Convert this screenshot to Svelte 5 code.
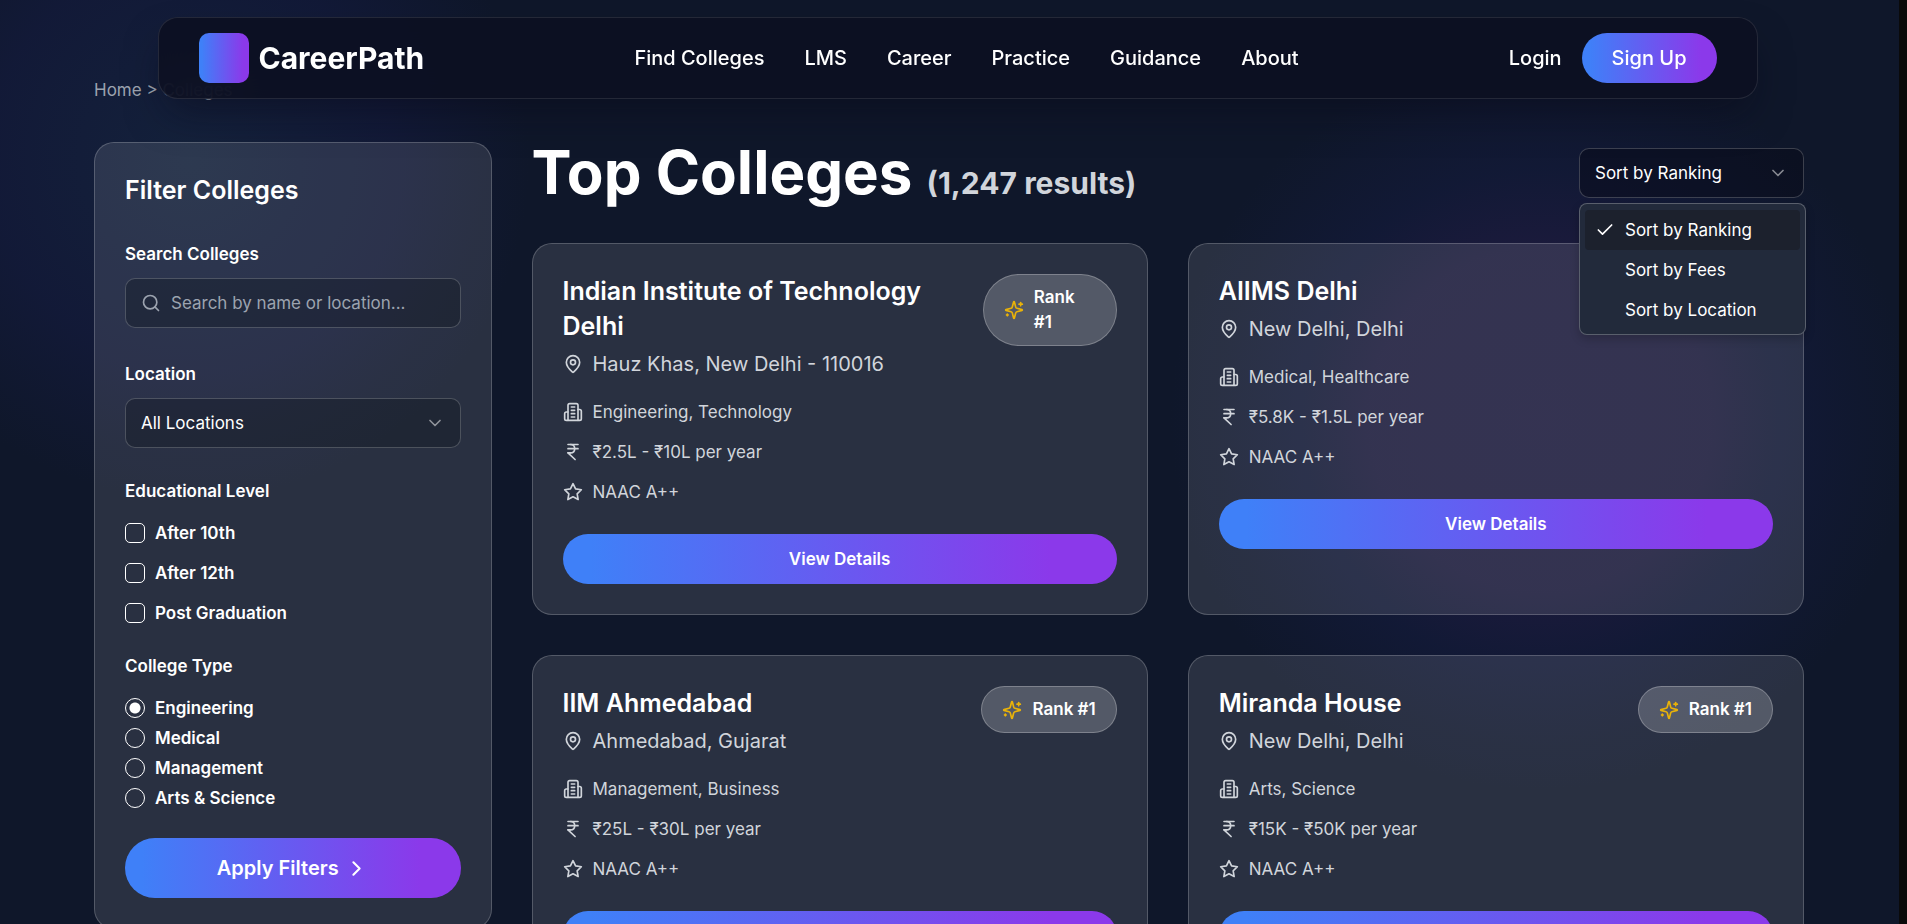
<script>
  const links = ['Find Colleges', 'LMS', 'Career', 'Practice', 'Guidance', 'About'];
  const levels = ['After 10th', 'After 12th', 'Post Graduation'];
  const types = ['Engineering', 'Medical', 'Management', 'Arts & Science'];
  const sorts = ['Sort by Ranking', 'Sort by Fees', 'Sort by Location'];

  const colleges = [
    { name: 'Indian Institute of Technology Delhi', place: 'Hauz Khas, New Delhi - 110016', field: 'Engineering, Technology', fees: '₹2.5L - ₹10L per year', grade: 'NAAC A++' },
    { name: 'AIIMS Delhi', place: 'New Delhi, Delhi', field: 'Medical, Healthcare', fees: '₹5.8K - ₹1.5L per year', grade: 'NAAC A++' },
    { name: 'IIM Ahmedabad', place: 'Ahmedabad, Gujarat', field: 'Management, Business', fees: '₹25L - ₹30L per year', grade: 'NAAC A++' },
    { name: 'Miranda House', place: 'New Delhi, Delhi', field: 'Arts, Science', fees: '₹15K - ₹50K per year', grade: 'NAAC A++' }
  ];

  const icons = {
    search: ['M19 11a8 8 0 1 1-16 0 8 8 0 0 1 16 0z', 'm21 21-4.3-4.3'],
    down: ['m6 9 6 6 6-6'],
    right: ['m9 18 6-6-6-6'],
    check: ['M20 6 9 17l-5-5'],
    pin: [
      'M20 10c0 4.993-5.539 10.193-7.399 11.799a1 1 0 0 1-1.202 0C9.539 20.193 4 14.993 4 10a8 8 0 0 1 16 0',
      'M15 10a3 3 0 1 1-6 0 3 3 0 0 1 6 0z'
    ],
    building: [
      'M6 22V4a2 2 0 0 1 2-2h8a2 2 0 0 1 2 2v18Z',
      'M6 12H4a2 2 0 0 0-2 2v6a2 2 0 0 0 2 2h2',
      'M18 9h2a2 2 0 0 1 2 2v9a2 2 0 0 1-2 2h-2',
      'M10 6h4', 'M10 10h4', 'M10 14h4', 'M10 18h4'
    ],
    rupee: ['M6 3h12', 'M6 8h12', 'm6 13 8.5 8', 'M6 13h3', 'M9 13c6.667 0 6.667-10 0-10'],
    star: ['M12 2l3.09 6.26L22 9.27l-5 4.87 1.18 6.88L12 17.77l-6.18 3.25L7 14.14 2 9.27l6.91-1.01L12 2z'],
    sparkles: [
      'M9.937 15.5A2 2 0 0 0 8.5 14.063l-6.135-1.582a.5.5 0 0 1 0-.962L8.5 9.936A2 2 0 0 0 9.937 8.5l1.582-6.135a.5.5 0 0 1 .963 0L14.063 8.5A2 2 0 0 0 15.5 9.937l6.135 1.581a.5.5 0 0 1 0 .964L15.5 14.063a2 2 0 0 0-1.437 1.437l-1.582 6.135a.5.5 0 0 1-.963 0z',
      'M20 3v4', 'M22 5h-4', 'M4 17v2', 'M5 18H3'
    ]
  };

  let search = $state('');
  let location = $state('All Locations');
  let picked = $state([]);
  let type = $state('Engineering');
  let sort = $state('Sort by Ranking');
  let open = $state(true);

  function chooseSort(value) {
    sort = value;
    open = false;
  }
</script>

{#snippet icon(name)}
  <svg class="icon {name}" viewBox="0 0 24 24" aria-hidden="true">
    {#each icons[name] as d}
      <path {d} />
    {/each}
  </svg>
{/snippet}

<div class="page">
  <header class="top">
    <nav>
      <a class="brand" href="#home"><span class="logo"></span>CareerPath</a>
      <div class="links">
        {#each links as link}
          <a href="#{link}">{link}</a>
        {/each}
      </div>
      <div class="account">
        <a href="#login">Login</a>
        <button class="primary signup">Sign Up</button>
      </div>
    </nav>
  </header>

  <main>
    <div class="crumbs"><a href="#home">Home</a> &gt; Colleges</div>

    <div class="layout">
      <form class="panel filters" onsubmit={(e) => e.preventDefault()}>
        <h2>Filter Colleges</h2>

        <div class="field">
          <label for="search">Search Colleges</label>
          <div class="control">
            {@render icon('search')}
            <input id="search" type="text" placeholder="Search by name or location..." bind:value={search} />
          </div>
        </div>

        <div class="field">
          <label for="location">Location</label>
          <div class="control">
            <select id="location" bind:value={location}>
              <option>All Locations</option>
              <option>Delhi</option>
              <option>Gujarat</option>
            </select>
            {@render icon('down')}
          </div>
        </div>

        <fieldset class="levels">
          <legend>Educational Level</legend>
          {#each levels as level}
            <label><input type="checkbox" value={level} bind:group={picked} />{level}</label>
          {/each}
        </fieldset>

        <fieldset class="types">
          <legend>College Type</legend>
          {#each types as t}
            <label><input type="radio" name="type" value={t} bind:group={type} />{t}</label>
          {/each}
        </fieldset>

        <button class="primary apply">Apply Filters {@render icon('right')}</button>
      </form>

      <section>
        <div class="heading">
          <h1>Top Colleges <span>(1,247 results)</span></h1>
          <div class="sort">
            <button class="trigger" aria-haspopup="listbox" aria-expanded={open} onclick={() => (open = !open)}>
              {sort}
              {@render icon('down')}
            </button>
            {#if open}
              <div class="menu" role="listbox" aria-label="Sort">
                {#each sorts as s}
                  <button role="option" aria-selected={s === sort} class:selected={s === sort} onclick={() => chooseSort(s)}>
                    <span class="tick">{#if s === sort}{@render icon('check')}{/if}</span>
                    {s}
                  </button>
                {/each}
              </div>
            {/if}
          </div>
        </div>

        <div class="cards">
          {#each colleges as college}
            <article class="panel card">
              <div class="card-head">
                <div>
                  <h3>{college.name}</h3>
                  <p class="place">{@render icon('pin')}{college.place}</p>
                </div>
                <div class="badge">{@render icon('sparkles')}<span>Rank #1</span></div>
              </div>
              <ul>
                <li>{@render icon('building')}{college.field}</li>
                <li>{@render icon('rupee')}{college.fees}</li>
                <li>{@render icon('star')}{college.grade}</li>
              </ul>
              <button class="primary details">View Details</button>
            </article>
          {/each}
        </div>
      </section>
    </div>
  </main>
</div>

<style>
  :global(body) {
    margin: 0;
    background: #0f172a;
  }
  .page, .page * {
    box-sizing: border-box;
  }
  .page {
    position: relative;
    height: 100vh;
    overflow: hidden;
    border-right: 8px solid #0a0a0a;
    background:
      radial-gradient(circle at 190px 160px, rgba(26, 46, 80, 0.45), rgba(24, 30, 80, 0.35) 200px, transparent 340px),
      radial-gradient(circle at 1540px 420px, rgba(54, 32, 96, 0.35), rgba(48, 32, 92, 0.35) 170px, rgba(24, 30, 80, 0.3) 250px, transparent 370px),
      #0f172a;
    color: #fff;
    font-family: Inter, "Liberation Sans", sans-serif;
    font-size: 17px;
    line-height: 26px;
  }
  h1, h2, h3, p, ul, fieldset {
    margin: 0;
    padding: 0;
    border: 0;
  }
  a {
    color: inherit;
    text-decoration: none;
  }
  button, input, select {
    font: inherit;
    color: inherit;
  }
  button {
    border: 0;
    cursor: pointer;
  }
  .icon {
    width: 20px;
    height: 20px;
    flex: none;
    fill: none;
    stroke: currentColor;
    stroke-width: 2;
    stroke-linecap: round;
    stroke-linejoin: round;
  }
  .primary {
    border-radius: 40px;
    background: linear-gradient(to right, #3f80f8 5%, #8b39ea 88%);
    font-weight: 600;
  }

  /* floating navigation bar */
  .top {
    position: absolute;
    z-index: 5;
    top: 17px;
    left: 16px;
    right: 0;
  }
  nav {
    display: flex;
    align-items: center;
    justify-content: space-between;
    max-width: 1600px;
    margin: 0 auto;
    padding: 15px 40px;
    border: 1px solid rgba(255, 255, 255, 0.1);
    border-radius: 20px;
    background: rgba(12, 16, 33, 0.9);
    backdrop-filter: blur(16px);
    box-shadow: 0 20px 40px -10px rgba(8, 8, 24, 0.5);
    font-size: 20px;
    font-weight: 500;
  }
  .brand {
    display: flex;
    align-items: center;
    gap: 10px;
    font-size: 30px;
    font-weight: 700;
  }
  .logo {
    width: 50px;
    height: 50px;
    border-radius: 10px;
    background: linear-gradient(to right, #3f80f8 5%, #8b39ea 88%);
  }
  .links {
    display: flex;
    gap: 40px;
  }
  .account {
    display: flex;
    align-items: center;
    gap: 20px;
  }
  .signup {
    height: 50px;
    padding: 0 30px;
    font-weight: 500;
  }

  main {
    padding: 77px 95px 0 94px;
  }
  .crumbs {
    margin-bottom: 39px;
    color: #9ca3af;
  }
  .layout {
    display: grid;
    grid-template-columns: repeat(4, minmax(0, 1fr));
    gap: 40px;
    align-items: start;
  }
  section {
    grid-column: span 3;
  }
  .panel {
    padding: 30px;
    border: 1px solid rgba(255, 255, 255, 0.2);
    border-radius: 20px;
    background: rgba(255, 255, 255, 0.11);
  }

  .filters {
    display: flex;
    flex-direction: column;
    gap: 30px;
    font-weight: 600;
  }
  h2, h3 {
    font-size: 25px;
    font-weight: 600;
    line-height: 35px;
  }
  .field {
    display: flex;
    flex-direction: column;
    gap: 8px;
    line-height: 32px;
  }
  .control {
    display: flex;
    align-items: center;
    gap: 10px;
    height: 50px;
    padding: 0 15px;
    border: 1px solid rgba(255, 255, 255, 0.2);
    border-radius: 10px;
    background: rgba(10, 15, 24, 0.3);
    font-weight: 400;
  }
  .control input, .control select {
    flex: 1;
    min-width: 0;
    padding: 0;
    border: 0;
    outline: 0;
    background: none;
    appearance: none;
  }
  .control input::placeholder {
    color: #9ca3af;
  }
  .control .search {
    color: #9ca3af;
  }
  .down {
    opacity: 0.5;
  }
  legend {
    margin-bottom: 19px;
    padding: 0;
  }
  fieldset {
    display: flex;
    flex-direction: column;
    gap: 20px;
  }
  .types {
    gap: 10px;
  }
  fieldset label {
    display: flex;
    align-items: center;
    gap: 10px;
    line-height: 20px;
  }
  fieldset input {
    width: 20px;
    height: 20px;
    margin: 0;
    border: 1px solid #fff;
    border-radius: 5px;
    appearance: none;
  }
  fieldset input[type="radio"] {
    border-radius: 50%;
  }
  fieldset input:checked {
    background: radial-gradient(circle, #fff 5px, transparent 6px);
  }
  .apply {
    display: flex;
    align-items: center;
    justify-content: center;
    gap: 5px;
    height: 60px;
    font-size: 20px;
  }
  .apply .icon {
    width: 25px;
    height: 25px;
  }

  .heading {
    display: flex;
    align-items: center;
    justify-content: space-between;
    margin-bottom: 40px;
  }
  h1 {
    font-size: 60px;
    font-weight: 700;
    line-height: 61px;
  }
  h1 span {
    color: #d1d5db;
    font-size: 30px;
    line-height: 30px;
  }
  .sort {
    position: relative;
    width: 225px;
  }
  .trigger {
    display: flex;
    align-items: center;
    justify-content: space-between;
    width: 100%;
    height: 50px;
    padding: 0 15px;
    border: 1px solid rgba(255, 255, 255, 0.2);
    border-radius: 10px;
    background: rgba(8, 10, 24, 0.5);
  }
  .menu {
    position: absolute;
    z-index: 3;
    top: 55px;
    left: 0;
    width: 227px;
    padding: 6px 5px 4px;
    border: 1px solid rgba(255, 255, 255, 0.25);
    border-radius: 8px;
    background: #222a3b;
    box-shadow: 0 4px 10px rgba(0, 0, 0, 0.2);
  }
  .menu button {
    display: flex;
    align-items: center;
    gap: 10px;
    width: 100%;
    height: 40px;
    padding: 0 10px;
    border-radius: 4px;
    background: none;
    white-space: nowrap;
  }
  .menu button.selected {
    background: #1c212d;
  }
  .tick {
    display: flex;
    width: 20px;
  }

  .cards {
    display: grid;
    grid-template-columns: repeat(2, minmax(0, 1fr));
    gap: 40px;
  }
  .card-head {
    display: flex;
    align-items: flex-start;
    justify-content: space-between;
    margin-bottom: 20px;
  }
  .place {
    display: flex;
    align-items: center;
    gap: 10px;
    margin-top: 5px;
    color: #d1d5db;
    font-size: 20px;
    line-height: 30px;
  }
  .badge {
    display: flex;
    align-items: center;
    gap: 10px;
    padding: 10px 20px;
    border: 1px solid rgba(255, 255, 255, 0.25);
    border-radius: 40px;
    background: rgba(255, 255, 255, 0.2);
    font-weight: 600;
    line-height: 25px;
  }
  .sparkles {
    color: #eab308;
  }
  ul {
    display: flex;
    flex-direction: column;
    gap: 14px;
    list-style: none;
    color: #d1d5db;
  }
  li {
    display: flex;
    align-items: center;
    gap: 10px;
  }
  .details {
    width: 100%;
    height: 50px;
    margin-top: 29px;
  }
</style>
